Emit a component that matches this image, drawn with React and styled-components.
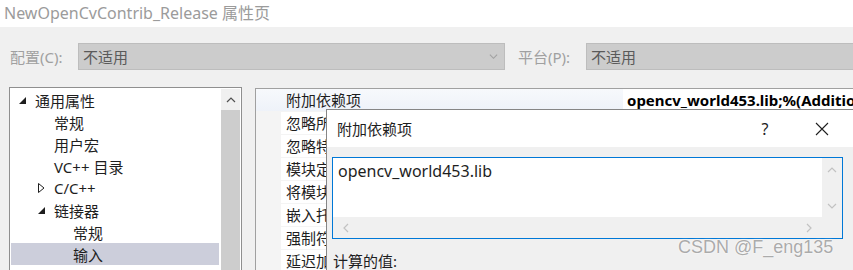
import React from 'react'
import styled, { createGlobalStyle } from 'styled-components'

const GlobalStyle = createGlobalStyle`
  html, body {
    margin: 0;
    padding: 0;
    background: #f0f0f0;
    font-family: "Noto Sans", "Noto Sans CJK SC", sans-serif;
  }
`

const Page = styled.div`
  position: relative;
  width: 853px;
  height: 270px;
  overflow: hidden;
  background: #f0f0f0;
`

const TitleBar = styled.div`
  height: 27px;
  background: #ffffff;
  color: #9b9b9b;
  font-size: 16px;
  line-height: 26px;
  padding-left: 4px;
  white-space: nowrap;
`

const ConfigRow = styled.div`
  display: flex;
  align-items: center;
  margin-top: 16px;
  padding-left: 10px;
  height: 27px;
`

const Label = styled.div`
  width: ${p => p.w}px;
  flex-shrink: 0;
  color: #a0a0a0;
  font-size: 15px;
  margin-left: ${p => p.ml || 0}px;
`

const Combo = styled.div`
  box-sizing: border-box;
  display: flex;
  align-items: center;
  justify-content: space-between;
  height: 27px;
  width: ${p => (p.w ? p.w + 'px' : 'auto')};
  flex: ${p => (p.w ? 'none' : '1')};
  background: #cccccc;
  border: 1px solid #bdbdbd;
  ${p => !p.w && 'border-right: none;'}
  padding: 0 6px 0 4px;
  color: #5a5a5a;
  font-size: 15px;
`

const Body = styled.div`
  display: flex;
  margin-top: 17px;
  padding-left: 9px;
  gap: 13px;
  height: 200px;
`

const TreePanel = styled.div`
  display: flex;
  width: 233px;
  box-sizing: border-box;
  border: 1px solid #8f8f8f;
  background: #ffffff;
  padding: 1px 1px 0 1px;
`

const TreeList = styled.div`
  width: 208px;
`

const TreeRow = styled.div`
  display: flex;
  align-items: center;
  height: 22px;
  padding-left: ${p => 8 + p.level * 19}px;
  background: ${p => (p.selected ? '#cccedb' : 'transparent')};
  color: #1e1e1e;
  font-size: 15px;
  white-space: nowrap;
`

const Expander = styled.span`
  display: flex;
  align-items: center;
  justify-content: flex-start;
  width: 16px;
  flex-shrink: 0;
`

const VScroll = styled.div`
  margin-left: 2px;
  width: 19px;
  display: flex;
  flex-direction: column;
`

const ScrollArrow = styled.div`
  height: 21px;
  display: flex;
  align-items: center;
  justify-content: center;
  background: #f0f0f0;
`

const ScrollThumb = styled.div`
  flex: 1;
  background: #cdcdcd;
`

const Grid = styled.div`
  flex: 1;
  border-top: 1px solid #a0a0a0;
  border-left: 1px solid #a0a0a0;
  margin-top: 1px;
  background: #f4f4f4;
`

const PropRow = styled.div`
  display: flex;
  height: 22px;
  margin-bottom: 1px;
  font-size: 15px;
  line-height: 22px;
  white-space: nowrap;
  background: ${p => (p.active ? 'linear-gradient(#f7f9fc, #eef2f9)' : 'transparent')};
`

const Gutter = styled.div`
  width: 25px;
  flex-shrink: 0;
`

const NameCell = styled.div`
  width: 337px;
  flex-shrink: 0;
  padding-left: 5px;
  color: #1e1e1e;
  background: ${p => (p.active ? 'transparent' : '#ffffff')};
  overflow: hidden;
`

const ValueCell = styled.div`
  flex: 1;
  padding-left: 4px;
  background: #ffffff;
  font-weight: 700;
  font-size: 15px;
  color: #000;
  overflow: hidden;
`

const Dialog = styled.div`
  position: absolute;
  left: 326px;
  top: 109px;
  width: 527px;
  height: 170px;
  box-sizing: border-box;
  border: 1px solid #868686;
  border-right: none;
  background: #f0f0f0;
`

const DialogHead = styled.div`
  display: flex;
  align-items: center;
  height: 37px;
  background: #ffffff;
  padding-left: 10px;
  font-size: 15px;
  color: #1e1e1e;
`

const HeadTitle = styled.div`
  flex: 1;
`

const HeadButton = styled.div`
  width: ${p => p.w}px;
  display: flex;
  justify-content: center;
  font-size: 16px;
  color: #1e1e1e;
`

const EditBox = styled.div`
  margin: 10px 0 0 5px;
  width: 511px;
  height: 82px;
  box-sizing: border-box;
  border: 1px solid #0078d7;
  display: grid;
  grid-template-columns: 1fr 20px;
  grid-template-rows: 59px 21px;
  background: #f0f0f0;
`

const EditText = styled.div`
  background: #ffffff;
  padding: 2px 0 0 5px;
  font-size: 16px;
  color: #1e1e1e;
`

const EditVScroll = styled.div`
  display: flex;
  flex-direction: column;
  justify-content: space-between;
  align-items: center;
  padding: 7px 0 6px;
`

const EditHScroll = styled.div`
  display: flex;
  justify-content: space-between;
  align-items: center;
  padding: 0 8px 0 8px;
`

const Computed = styled.div`
  margin: 11px 0 0 6px;
  font-size: 15px;
  color: #1e1e1e;
`

const Watermark = styled.div`
  position: absolute;
  left: 678px;
  top: 237px;
  font-family: "Liberation Sans", "Noto Sans", sans-serif;
  font-size: 18px;
  color: #ababab;
  text-shadow: 0 0 2px #ffffff, 0 0 1px #ffffff;
  white-space: nowrap;
`

const Chevron = ({ dir, color = '#9a9a9a', size = 10 }) => {
  const pts = {
    up: '1,7 5,3 9,7',
    down: '1,3 5,7 9,3',
    left: '7,1 3,5 7,9',
    right: '3,1 7,5 3,9',
  }[dir]
  return (
    <svg width={size} height={size} viewBox="0 0 10 10">
      <polyline points={pts} fill="none" stroke={color} strokeWidth="1.2" />
    </svg>
  )
}

const Expanded = () => (
  <svg width="7" height="7" viewBox="0 0 7 7">
    <polygon points="0,7 7,7 7,0" fill="#1e1e1e" />
  </svg>
)

const Collapsed = () => (
  <svg width="7" height="10" viewBox="0 0 7 10">
    <polygon points="0.5,0.5 6,5 0.5,9.5" fill="none" stroke="#1e1e1e" strokeWidth="1" />
  </svg>
)

const treeItems = [
  { label: '通用属性', level: 0, exp: 'open' },
  { label: '常规', level: 1 },
  { label: '用户宏', level: 1 },
  { label: 'VC++ 目录', level: 1 },
  { label: 'C/C++', level: 1, exp: 'closed' },
  { label: '链接器', level: 1, exp: 'open' },
  { label: '常规', level: 2 },
  { label: '输入', level: 2, selected: true },
]

const props = [
  '附加依赖项',
  '忽略所有默认库',
  '忽略特定默认库',
  '模块定义文件',
  '将模块添加到程序集',
  '嵌入托管资源文件',
  '强制符号引用',
  '延迟加载的 DLL',
]

export default function App() {
  return (
    <Page>
      <GlobalStyle />
      <TitleBar>NewOpenCvContrib_Release 属性页</TitleBar>
      <ConfigRow>
        <Label w={68}>配置(C):</Label>
        <Combo w={427}>
          <span>不适用</span>
          <Chevron dir="down" color="#a0a0a0" size={9} />
        </Combo>
        <Label w={68} ml={13}>平台(P):</Label>
        <Combo>
          <span>不适用</span>
        </Combo>
      </ConfigRow>
      <Body>
        <TreePanel>
          <TreeList>
            {treeItems.map((t, i) => (
              <TreeRow key={i} level={t.level} selected={t.selected}>
                <Expander>
                  {t.exp === 'open' && <Expanded />}
                  {t.exp === 'closed' && <Collapsed />}
                </Expander>
                {t.label}
              </TreeRow>
            ))}
          </TreeList>
          <VScroll>
            <ScrollArrow>
              <Chevron dir="up" color="#505050" />
            </ScrollArrow>
            <ScrollThumb />
          </VScroll>
        </TreePanel>
        <Grid>
          {props.map((name, i) => (
            <PropRow key={i} active={i === 0}>
              <Gutter />
              <NameCell active={i === 0}>{name}</NameCell>
              <ValueCell>{i === 0 ? 'opencv_world453.lib;%(AdditionalDependencies)' : ''}</ValueCell>
            </PropRow>
          ))}
        </Grid>
      </Body>
      <Dialog>
        <DialogHead>
          <HeadTitle>附加依赖项</HeadTitle>
          <HeadButton w={52}>?</HeadButton>
          <HeadButton w={62}>
            <svg width="14" height="14" viewBox="0 0 14 14">
              <path d="M1 1 L13 13 M13 1 L1 13" stroke="#1e1e1e" strokeWidth="1.1" />
            </svg>
          </HeadButton>
        </DialogHead>
        <EditBox>
          <EditText>opencv_world453.lib</EditText>
          <EditVScroll>
            <Chevron dir="up" color="#c2c2c2" />
            <Chevron dir="down" color="#c2c2c2" />
          </EditVScroll>
          <EditHScroll>
            <Chevron dir="left" color="#c2c2c2" />
            <Chevron dir="right" color="#c2c2c2" />
          </EditHScroll>
          <div />
        </EditBox>
        <Computed>计算的值:</Computed>
      </Dialog>
      <Watermark>CSDN @F_eng135</Watermark>
    </Page>
  )
}
